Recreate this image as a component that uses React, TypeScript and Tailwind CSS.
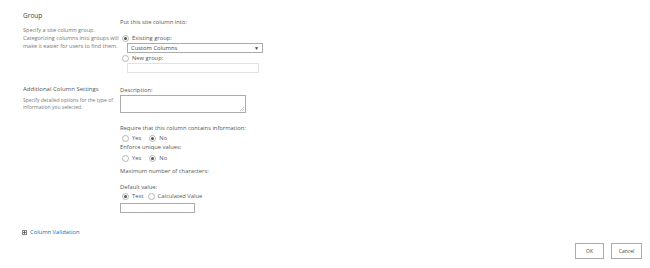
import React from "react";

function Radio({ checked }: { checked?: boolean }) {
  return (
    <span className="inline-flex h-[7px] w-[7px] items-center justify-center rounded-full border border-[#b5b5b5] bg-white">
      {checked && <span className="h-[3px] w-[3px] rounded-full bg-[#555]" />}
    </span>
  );
}

function RadioLabel({ checked, label }: { checked?: boolean; label: string }) {
  return (
    <span className="flex items-center gap-[3px]">
      <Radio checked={checked} />
      <span>{label}</span>
    </span>
  );
}

export default function App() {
  return (
    <div className="h-[268px] w-[650px] overflow-hidden bg-white font-['Open_Sans','Liberation_Sans',sans-serif] text-[5.8px] leading-[8px] text-[#555]">
      {/* Group section */}
      <div className="flex pt-[12px]">
        <div className="w-[120px] shrink-0 pl-[23px]">
          <div className="text-[6.5px] text-[#444]">Group</div>
          <div className="mt-[6px] w-[97px] text-[5.5px] leading-[8px] text-[#777]">
            Specify a site column group. Categorizing columns into groups will make it easier for users to find them.
          </div>
        </div>
        <div className="pt-[6px]">
          <div>Put this site column into:</div>
          <div className="mt-[8px] pl-[2px]">
            <RadioLabel checked label="Existing group:" />
          </div>
          <div className="ml-[7px] mt-[1px] flex h-[10px] w-[136px] items-center justify-between border border-[#ababab] px-[3px] text-[#444]">
            <span>Custom Columns</span>
            <span className="text-[5px]">▼</span>
          </div>
          <div className="mt-[1px] pl-[2px]">
            <RadioLabel label="New group:" />
          </div>
          <div className="ml-[7px] mt-[1px] h-[10px] w-[132px] border border-[#e1e1e1]" />
        </div>
      </div>

      {/* Additional column settings */}
      <div className="mt-[12px] flex">
        <div className="w-[120px] shrink-0 pl-[23px]">
          <div className="text-[6px] text-[#555]">Additional Column Settings</div>
          <div className="mt-[4px] w-[92px] text-[5px] leading-[6.5px] text-[#777]">
            Specify detailed options for the type of information you selected.
          </div>
        </div>
        <div className="pt-[1px]">
          <div>Description:</div>
          <div className="relative mt-[1px] h-[18px] w-[126px] border border-[#ababab]">
            <svg className="absolute bottom-[1px] right-[1px]" width="4" height="4" viewBox="0 0 4 4">
              <path d="M4 0L0 4M4 2L2 4" stroke="#999" strokeWidth="0.6" />
            </svg>
          </div>

          <div className="mt-[11px]">Require that this column contains information:</div>
          <div className="mt-[2px] flex gap-[8px] pl-[2px]">
            <RadioLabel label="Yes" />
            <RadioLabel checked label="No" />
          </div>

          <div className="mt-[1px]">Enforce unique values:</div>
          <div className="mt-[3px] flex gap-[8px] pl-[2px]">
            <RadioLabel label="Yes" />
            <RadioLabel checked label="No" />
          </div>

          <div className="mt-[5px]">Maximum number of characters:</div>

          <div className="mt-[8px]">Default value:</div>
          <div className="mt-[1px] flex gap-[4px] pl-[2px]">
            <RadioLabel checked label="Text" />
            <RadioLabel label="Calculated Value" />
          </div>
          <div className="mt-[3px] h-[10px] w-[75px] border border-[#ababab]" />
        </div>
      </div>

      {/* Column validation */}
      <div className="mt-[15px] flex items-center gap-[3px] pl-[22px] text-[#0072c6]">
        <span className="flex h-[5px] w-[5px] items-center justify-center border border-[#8a8a8a]">
          <svg width="3" height="3" viewBox="0 0 3 3">
            <path d="M0 1.5H3M1.5 0V3" stroke="#555" strokeWidth="0.8" />
          </svg>
        </span>
        <span>Column Validation</span>
      </div>

      {/* Buttons */}
      <div className="mt-[7px] flex justify-end gap-[7px] pr-[8px]">
        <button className="h-[16px] w-[29px] border border-[#ababab] bg-white text-[5px] text-[#444]">OK</button>
        <button className="h-[16px] w-[31px] border border-[#ababab] bg-white text-[5px] text-[#444]">Cancel</button>
      </div>
    </div>
  );
}
